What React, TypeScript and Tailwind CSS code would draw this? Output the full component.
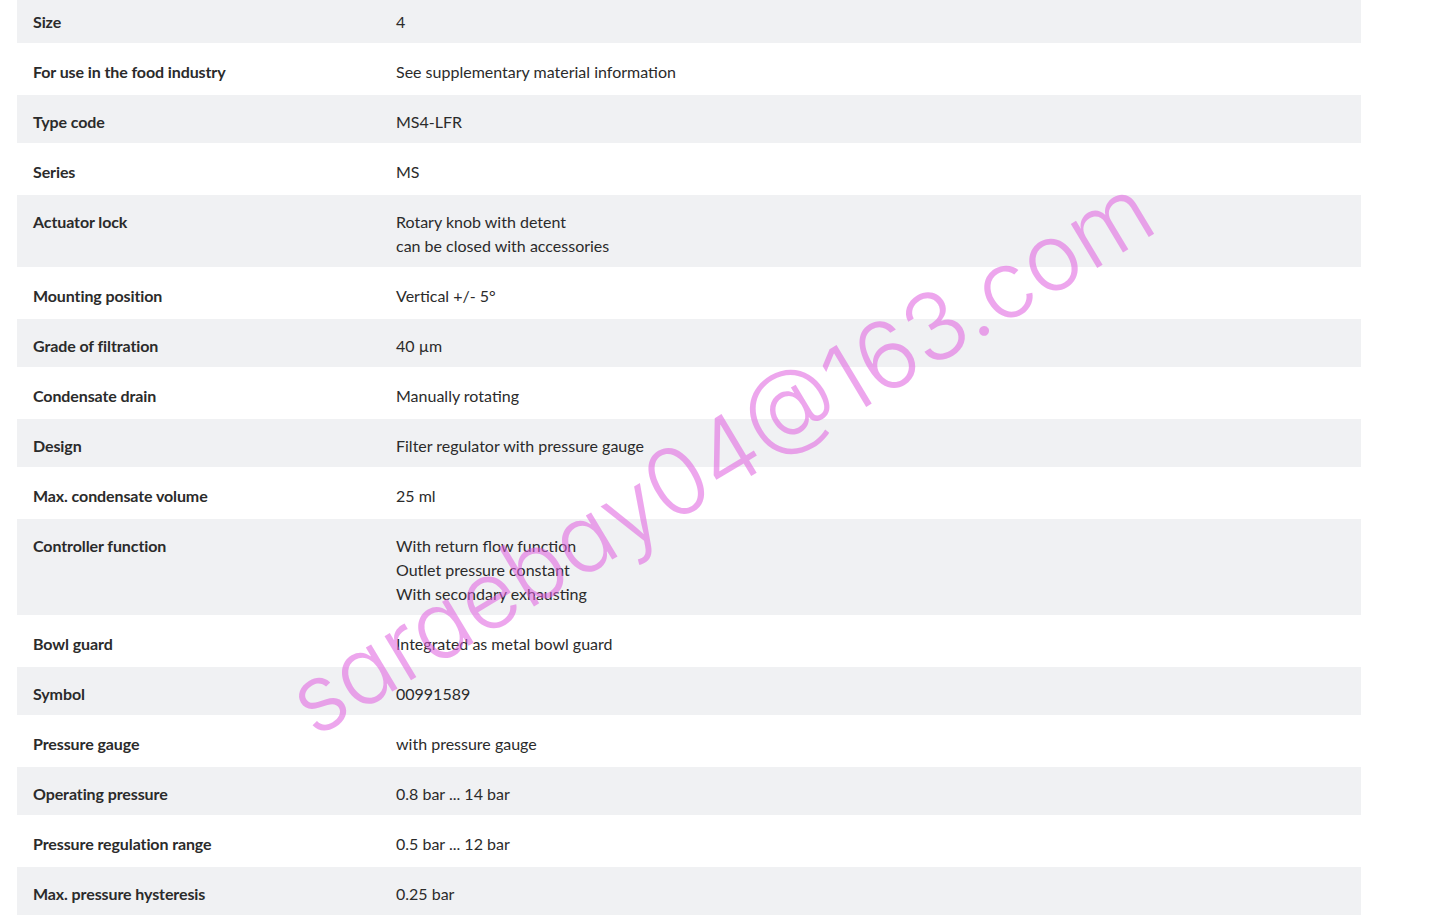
import React from "react";

const rows: { label: string; value: string[] }[] = [
  { label: "Size", value: ["4"] },
  { label: "For use in the food industry", value: ["See supplementary material information"] },
  { label: "Type code", value: ["MS4-LFR"] },
  { label: "Series", value: ["MS"] },
  { label: "Actuator lock", value: ["Rotary knob with detent", "can be closed with accessories"] },
  { label: "Mounting position", value: ["Vertical +/- 5°"] },
  { label: "Grade of filtration", value: ["40 µm"] },
  { label: "Condensate drain", value: ["Manually rotating"] },
  { label: "Design", value: ["Filter regulator with pressure gauge"] },
  { label: "Max. condensate volume", value: ["25 ml"] },
  {
    label: "Controller function",
    value: ["With return flow function", "Outlet pressure constant", "With secondary exhausting"],
  },
  { label: "Bowl guard", value: ["Integrated as metal bowl guard"] },
  { label: "Symbol", value: ["00991589"] },
  { label: "Pressure gauge", value: ["with pressure gauge"] },
  { label: "Operating pressure", value: ["0.8 bar ... 14 bar"] },
  { label: "Pressure regulation range", value: ["0.5 bar ... 12 bar"] },
  { label: "Max. pressure hysteresis", value: ["0.25 bar"] },
];

export default function App() {
  return (
    <div className="relative w-[1442px] h-[916px] overflow-hidden bg-white font-['Lato',sans-serif] text-[16px] text-[#2b2b2b]">
      <div className="ml-[17px] mt-[-5px] w-[1344px] flex flex-col gap-[2px]">
        {rows.map((r, i) => (
          <div key={i} className={`flex pt-[15px] pb-[9px] leading-[24px] ${i % 2 === 0 ? "bg-[#f0f1f3]" : "bg-white"}`}>
            <div className="w-[363px] shrink-0 pl-[16px] font-bold tracking-[-0.1px]">{r.label}</div>
            <div className="pl-[16px] flex flex-col">
              {r.value.map((v, j) => (
                <span key={j}>{v}</span>
              ))}
            </div>
          </div>
        ))}
      </div>
      <div className="absolute left-[720px] top-[455px] -translate-x-1/2 -translate-y-1/2 -rotate-[31deg] whitespace-nowrap font-['Inter',sans-serif] font-light text-[94px] leading-none text-[#e05fe0] opacity-55 [font-feature-settings:'cv11'] pointer-events-none">
        saraebay04@163.com
      </div>
    </div>
  );
}
